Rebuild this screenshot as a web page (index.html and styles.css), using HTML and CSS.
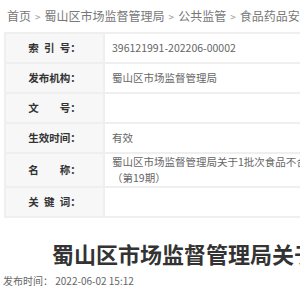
FILE: index.html
```html
<!DOCTYPE html>
<html lang="zh-CN">
<head>
    <meta charset="UTF-8">
    <meta name="viewport" content="width=device-width, initial-scale=1.0">
    <title>蜀山区市场监督管理局</title>
    <link rel="stylesheet" href="styles.css">
</head>
<body>
    <div class="page">
        <!-- breadcrumb -->
        <div class="crumbs">
            <a href="#">首页</a><span class="sep">&gt;</span><a href="#">蜀山区市场监督管理局</a><span class="sep">&gt;</span><a href="#">公共监管</a><span class="sep">&gt;</span><a href="#">食品药品安全</a>
        </div>

        <table class="info">
            <tr>
                <td class="label">索&ensp;引&ensp;号：</td>
                <td class="value">396121991-202206-00002</td>
            </tr>
            <tr>
                <td class="label">发布机构：</td>
                <td class="value">蜀山区市场监督管理局</td>
            </tr>
            <tr>
                <td class="label">文&emsp;&emsp;号：</td>
                <td class="value"></td>
            </tr>
            <tr>
                <td class="label">生效时间：</td>
                <td class="value">有效</td>
            </tr>
            <tr class="tall">
                <td class="label">名&emsp;&emsp;称：</td>
                <td class="value">蜀山区市场监督管理局关于1批次食品不合格情况的通告<span class="keep">（第19期）</span></td>
            </tr>
            <tr>
                <td class="label">关&ensp;键&ensp;词：</td>
                <td class="value"></td>
            </tr>
        </table>

        <h1 class="title">蜀山区市场监督管理局关于1批次食品不合格情况的通告（第19期）</h1>
        <div class="meta">发布时间：&nbsp;2022-06-02 15:12</div>
    </div>
</body>
</html>
```

FILE: styles.css
```css
html, body {
    margin: 0;
    overflow: hidden;
    background-color: #fff;
}

body {
    font-family: "Noto Sans CJK SC", "Noto Sans", sans-serif;
    color: #666;
}

.page {
    padding-left: 4px;
    width: 800px;
}

.crumbs {
    padding-left: 3px;
    height: 32px;
    line-height: 32px;
    font-size: 12px;
    white-space: nowrap;
}

.crumbs a {
    color: #777;
    text-decoration: none;
}

.crumbs .sep {
    display: inline-block;
    margin: 0 4px;
    font-size: 10px;
    color: #999;
}

.info {
    border-collapse: collapse;
    table-layout: fixed;
    width: 400px;
    font-size: 10.5px;
}

.info td {
    border: 2px solid #efefef;
    height: 28px;
    padding: 0;
    line-height: 16px;
}

.info .label {
    width: 97px;
    background-color: #f7f7f7;
    color: #333;
    font-weight: bold;
    text-align: center;
    white-space: nowrap;
}

.info .value {
    padding-left: 7px;
    color: #666;
}

.info .tall td {
    height: 32px;
    line-height: 16px;
}

.keep {
    white-space: nowrap;
}

.title {
    margin: 20px 0 0;
    padding-left: 48px;
    font-size: 22px;
    line-height: 30px;
    font-weight: bold;
    color: #333;
    white-space: nowrap;
}

.meta {
    margin-top: 3px;
    margin-left: -1px;
    font-size: 10px;
    line-height: 20px;
    color: #666;
}
```
